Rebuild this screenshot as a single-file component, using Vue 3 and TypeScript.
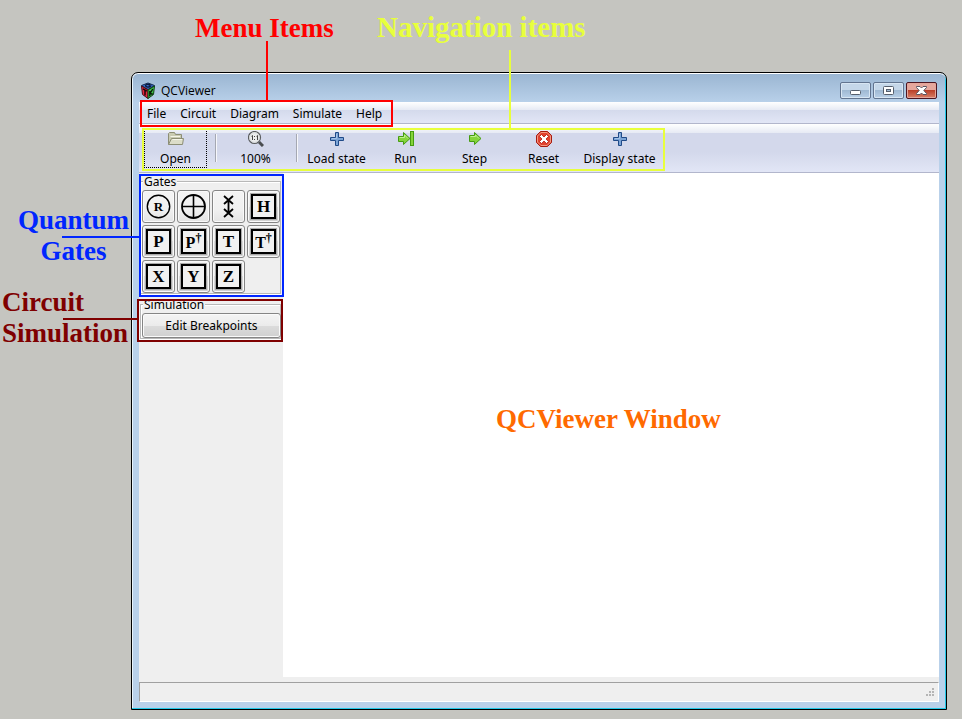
<script setup lang="ts">
interface Gate {
  id: string
  title: string
  letter?: string
  dagger?: boolean
}

const menus: string[] = ['File', 'Circuit', 'Diagram', 'Simulate', 'Help']

const gates: Gate[] = [
  { id: 'rotation', title: 'Rotation' },
  { id: 'not', title: 'Controlled not' },
  { id: 'swap', title: 'Swap' },
  { id: 'h', title: 'Hadamard', letter: 'H' },
  { id: 'p', title: 'Phase', letter: 'P' },
  { id: 'pd', title: 'Phase dagger', letter: 'P', dagger: true },
  { id: 't', title: 'T gate', letter: 'T' },
  { id: 'td', title: 'T dagger', letter: 'T', dagger: true },
  { id: 'x', title: 'X gate', letter: 'X' },
  { id: 'y', title: 'Y gate', letter: 'Y' },
  { id: 'z', title: 'Z gate', letter: 'Z' },
]
</script>

<template>
  <div class="page">
    <main class="window">
      <header class="titlebar">
        <svg class="logo" width="16" height="18" viewBox="0 0 16 18" aria-hidden="true">
          <path d="M8 1L14.5 3.5L8 7.500L1.500 3.500Z" fill="#3a6fd0" stroke="#14294f" />
          <path d="M1.500 4L8 8V16.500L2.500 12.500Z" fill="#e8283f" stroke="#4d0c16" />
          <path d="M14.500 4L8 8V16.500L13.500 12.500Z" fill="#3fc048" stroke="#0f4014" />
          <path d="M10.500 2.800C8.500 1.800 5.500 2.500 5.500 3.800C6 5.300 9.500 5.800 10.500 4.200H8.500" fill="none" stroke="#0c1a3a" stroke-width="1.300" />
          <path d="M3 6.800L6.800 9.200M5 8V13.500" fill="none" stroke="#1b0508" stroke-width="1.500" />
          <path d="M9.800 9V14.300M12.800 7L10 11.500L12.800 12.200" fill="none" stroke="#061a08" stroke-width="1.400" />
        </svg>
        <h1>QCViewer</h1>
        <div class="controls">
          <button type="button" aria-label="Minimize">
            <svg width="29" height="15" viewBox="0 0 29 15"><rect x="9.5" y="7.5" width="10" height="4" rx="1" fill="#fff" stroke="#555e6c" /></svg>
          </button>
          <button type="button" aria-label="Maximize">
            <svg width="29" height="15" viewBox="0 0 29 15"><rect x="9.5" y="3.5" width="10" height="8" rx="1" fill="#fff" stroke="#555e6c" /><rect x="12.5" y="6.5" width="4" height="2" fill="#9eb8d2" stroke="#555e6c" /></svg>
          </button>
          <button type="button" class="close" aria-label="Close">
            <svg width="29" height="15" viewBox="0 0 29 15"><path d="M9.5 3.5H13L14.5 5L16 3.5H19.5V4.5L16.8 7.5L19.5 10.5V11.5H16L14.5 10L13 11.5H9.5V10.5L12.2 7.5L9.5 4.5Z" fill="#fff" stroke="#5a5662" /></svg>
          </button>
        </div>
      </header>

      <div class="client">
        <nav class="menubar">
          <button v-for="m in menus" :key="m" type="button">{{ m }}</button>
        </nav>

        <div class="toolbar">
          <button type="button" class="tool focused">
            <svg width="16" height="16" viewBox="0 0 16 16">
              <path d="M0.5 13.5V2.5L1.5 1.5H6.5L7.5 3.5H13.5V7" fill="#c9cbb2" stroke="#8c8e75" />
              <path d="M2.5 5.5H12" stroke="#f4f4e8" />
              <path d="M3.500 7.500H15.500L14.500 13.500H0.500Z" fill="#dcddc8" stroke="#8c8e75" />
              <path d="M4.500 8.500H14" stroke="#f6f6ea" />
            </svg>
            <span>Open</span>
          </button>
          <i class="sep"></i>
          <button type="button" class="tool">
            <svg width="16" height="16" viewBox="0 0 16 16">
              <path d="M11 11L15 15" stroke="#4a4d50" stroke-width="3" />
              <circle cx="6.5" cy="6.5" r="6" fill="#eceeee" stroke="#5b5e60" stroke-width="1.2" />
              <circle cx="6.5" cy="6.5" r="4.9" fill="none" stroke="#cfd3d5" />
              <path d="M3.5 5.3L4.5 4.5V9M8.5 5.3L9.5 4.5V9" fill="none" stroke="#444" />
              <path d="M6 5H7V6H6ZM6 8H7V9H6Z" fill="#444" />
            </svg>
            <span>100%</span>
          </button>
          <i class="sep"></i>
          <button type="button" class="tool">
            <svg width="16" height="16" viewBox="0 0 16 16"><path d="M6.5 1.5H9.5V6.5H14.5V9.5H9.5V14.5H6.5V9.5H1.5V6.5H6.5Z" fill="#7ba4d6" stroke="#204a87" /><path d="M7.5 3V7.5H3" fill="none" stroke="#a5c4e8" /></svg>
            <span>Load state</span>
          </button>
          <button type="button" class="tool">
            <svg width="18" height="16" viewBox="0 0 18 16"><path d="M1.5 5.5H6.5V1.5L13 7.5L6.5 13.5V10.5H1.5Z" fill="#84d43a" stroke="#459c10" /><path d="M2.5 6.5H7.5V4L11 7.5" fill="none" stroke="#c0ef91" /><rect x="13.5" y="0.5" width="3" height="14" fill="#84d43a" stroke="#459c10" /></svg>
            <span>Run</span>
          </button>
          <button type="button" class="tool">
            <svg width="16" height="16" viewBox="0 0 16 16"><path d="M2.5 4.5H7.5V1.5L14 7.5L7.5 13.5V10.5H2.5Z" fill="#84d43a" stroke="#459c10" /><path d="M3.5 5.5H8.5V4L12 7.5" fill="none" stroke="#c0ef91" /></svg>
            <span>Step</span>
          </button>
          <button type="button" class="tool">
            <svg width="16" height="16" viewBox="0 0 16 16"><path d="M4.5 0.5H11.5L15.5 4.5V11.5L11.5 15.5H4.5L0.5 11.5V4.5Z" fill="#e2422e" stroke="#a51b10" /><path d="M5 1.5H11L14.5 5V11L11 14.5H5L1.5 11V5Z" fill="none" stroke="#f29a83" /><path d="M3.5 5.500L5.500 3.500L8 6L10.500 3.500L12.500 5.500L10 8L12.500 10.500L10.500 12.500L8 10L5.500 12.500L3.500 10.500L6 8Z" fill="#fff" stroke="#b31b12" stroke-width=".8" /></svg>
            <span>Reset</span>
          </button>
          <button type="button" class="tool wide">
            <svg width="16" height="16" viewBox="0 0 16 16"><path d="M6.5 1.5H9.5V6.5H14.5V9.5H9.5V14.5H6.5V9.5H1.5V6.5H6.5Z" fill="#7ba4d6" stroke="#204a87" /><path d="M7.5 3V7.5H3" fill="none" stroke="#a5c4e8" /></svg>
            <span>Display state</span>
          </button>
        </div>

        <div class="body">
          <aside class="sidebar">
            <section class="group">
              <h2>Gates</h2>
              <div class="gates">
                <button v-for="g in gates" :key="g.id" type="button" class="gate" :class="{ plain: !g.letter }" :aria-label="g.title">
                  <span v-if="g.letter" class="box" :class="{ dag: g.dagger }">{{ g.letter }}<sup v-if="g.dagger">†</sup></span>
                  <svg v-else-if="g.id === 'rotation'" width="25" height="25" viewBox="0 0 25 25"><circle cx="12.5" cy="12.5" r="11.2" fill="none" stroke="#000" stroke-width="1.4" /><text class="ring-letter" x="12.5" y="17" text-anchor="middle">R</text></svg>
                  <svg v-else-if="g.id === 'not'" width="25" height="25" viewBox="0 0 25 25"><circle cx="12.5" cy="12.5" r="11.5" fill="none" stroke="#000" stroke-width="1.8" /><path d="M12.5 1V24M1 12.5H24" stroke="#000" stroke-width="1.6" /></svg>
                  <svg v-else width="25" height="25" viewBox="0 0 25 25"><path d="M12.5 6V19M8 2L17 10M17 2L8 10M8 15L17 23M17 15L8 23" fill="none" stroke="#000" stroke-width="1.8" /></svg>
                </button>
              </div>
            </section>
            <section class="group">
              <h2>Simulation</h2>
              <button type="button" class="edit">Edit Breakpoints</button>
            </section>
          </aside>
          <section class="canvas"></section>
        </div>

        <footer class="status">
          <svg width="10" height="10" viewBox="0 0 10 10" aria-hidden="true"><path d="M7 1h2M4 4h2M7 4h2M1 7h2M4 7h2M7 7h2" stroke="#b5b5b5" stroke-width="2" /></svg>
        </footer>
      </div>
    </main>

    <div class="note red box-menu"></div>
    <div class="note yellow box-nav"></div>
    <div class="note blue box-gates"></div>
    <div class="note maroon box-sim"></div>
    <div class="line red line-menu"></div>
    <div class="line yellow line-nav"></div>
    <div class="line blue line-gates"></div>
    <div class="line maroon line-sim"></div>
    <p class="label red label-menu">Menu Items</p>
    <p class="label yellow label-nav">Navigation items</p>
    <p class="label blue label-gates">Quantum<br />Gates</p>
    <p class="label maroon label-sim">Circuit<br />Simulation</p>
    <p class="label orange label-canvas">QCViewer Window</p>
  </div>
</template>

<style>
body {
  margin: 0;
  background: #c5c5c0;
}
</style>

<style scoped>
* {
  box-sizing: border-box;
}
.page {
  position: relative;
  display: flex;
  min-height: 100vh;
  padding: 72px 15px 9px 131px;
  font-family: "Noto Sans", "DejaVu Sans Condensed", sans-serif;
  font-size: 12px;
  line-height: 16px;
  color: #000;
}
button {
  margin: 0;
  padding: 0;
  border: 0;
  background: none;
  font: inherit;
  color: inherit;
}
svg {
  display: block;
}
.window {
  flex: 1;
  display: flex;
  flex-direction: column;
  padding: 0 7px 7px;
  border: 1px solid #000;
  border-radius: 7px 7px 0 0;
  background: linear-gradient(#9ab5d1, #b9d1ea 30px, #b9d1ea);
  box-shadow: inset 0 1px #fff, inset -1px -1px #22c8e8, inset 1px 0 #e8f4fc;
}
.titlebar {
  display: flex;
  align-items: center;
  height: 29px;
  padding: 6px 2px 0 1px;
}
.titlebar h1 {
  flex: 1;
  margin: 0 0 0 5px;
  font: 12px/16px "Open Sans", "Noto Sans", sans-serif;
}
.controls {
  display: flex;
  gap: 2px;
}
.controls button {
  height: 17px;
  border: 1px solid #62748f;
  border-radius: 2px;
  background: linear-gradient(#c5d7e9 45%, #9db7d1 45%, #b9d0e8);
  box-shadow: inset 0 0 0 1px #d8e6f3;
}
.controls .close {
  border-color: #4c1521;
  background: linear-gradient(#e5a79d 45%, #b83a23 45%, #d78068);
  box-shadow: inset 0 0 0 1px #e4a59a;
}
.client {
  flex: 1;
  display: flex;
  flex-direction: column;
  background: #efefef;
}
.menubar {
  display: flex;
  height: 22px;
  padding-left: 1px;
  border-bottom: 1px solid #b2b6cc;
  background: linear-gradient(#fff, #e6eaf4 8px, #d4daec 8px, #e2e6f6);
}
.menubar button {
  padding: 2px 7px 0;
}
.toolbar {
  display: flex;
  height: 49px;
  padding: 5px;
  border-bottom: 1px solid #b2b6cc;
  background: linear-gradient(#fff, #e6eaf4 9px, #d3d8eb 9px, #d3d8eb 28px, #e2e6f6);
}
.tool {
  display: flex;
  flex-direction: column;
  align-items: center;
  gap: 4px;
  width: 69px;
  height: 39px;
  padding-top: 2px;
  white-space: nowrap;
}
.tool.focused {
  width: 63px;
  border: 1px dotted #000;
  padding-top: 1px;
}
.tool.wide {
  width: 83px;
}
.sep {
  width: 2px;
  height: 28px;
  margin: 5px 4px 0 6px;
  border-left: 1px solid #a5a8b2;
  border-right: 1px solid #f6f7fb;
}
.focused + .sep {
  margin-left: 8px;
}
.body {
  flex: 1;
  display: flex;
}
.sidebar {
  width: 144px;
  padding: 3px 2px 0 1px;
}
.group {
  position: relative;
  padding: 14px 0 1px 2px;
}
.group::before {
  content: "";
  position: absolute;
  inset: 5px 0 0;
  border: 1px solid #b8b8b8;
  box-shadow: inset 1px 1px #fff, 0 1px #fff;
}
.group h2 {
  position: absolute;
  top: -2px;
  left: 3px;
  margin: 0;
  padding: 0 1px;
  background: #efefef;
  font-size: 12px;
  font-weight: 400;
  line-height: 16px;
}
.group + .group {
  margin-top: 5px;
}
.gates {
  position: relative;
  display: grid;
  grid-template-columns: repeat(4, 33px);
  gap: 2px;
}
.gate {
  display: grid;
  place-items: center;
  height: 33px;
}
.gate,
.edit {
  border: 1px solid #858585;
  border-radius: 3px;
  background: linear-gradient(#f4f4f4, #ebebeb 50%, #dcdcdc 50%, #d0d0d0);
  box-shadow: inset 0 0 0 1px #fafafa;
}
.gate.plain {
  background: linear-gradient(#f4f4f4, #f0f0f0 60%, #e4e4e4);
}
.box {
  width: 25px;
  height: 25px;
  border: 2px solid #000;
  background: #f1f1f1;
  box-shadow: 0 0 0 1px #aaa;
  font: 700 17px/21px "Liberation Serif", serif;
  text-align: center;
}
.dag {
  display: flex;
  justify-content: center;
  font-size: 16px;
  line-height: 23px;
}
.dag sup {
  font-size: 12px;
  line-height: 15px;
}
.ring-letter {
  font: 700 13px "Liberation Serif", serif;
}
.edit {
  position: relative;
  width: 139px;
  height: 25px;
}
.canvas {
  flex: 1;
  background: #fff;
}
.status {
  display: flex;
  align-items: flex-end;
  justify-content: flex-end;
  height: 20px;
  margin-top: 5px;
  padding: 3px;
  border: 1px solid #a0a0a0;
  border-right-color: #fff;
  border-bottom-color: #fff;
}

/* Callouts drawn over the window */
.red { color: #f00; }
.yellow { color: #e8ff3c; }
.blue { color: #0026ff; }
.maroon { color: #7f0000; }
.orange { color: #ff6a00; }
.note {
  position: absolute;
  border: 2px solid;
  pointer-events: none;
}
.box-menu { left: 140px; top: 100px; width: 253px; height: 27px; }
.box-nav { left: 142px; top: 128px; width: 523px; height: 43px; }
.box-gates { left: 139px; top: 174px; width: 145px; height: 123px; }
.box-sim { left: 137px; top: 299px; width: 146px; height: 43px; }
.line {
  position: absolute;
  background: currentColor;
}
.line-menu { left: 266px; top: 41px; width: 2px; height: 60px; }
.line-nav { left: 509px; top: 50px; width: 2px; height: 79px; }
.line-gates { left: 62px; top: 236px; width: 78px; height: 2px; }
.line-sim { left: 63px; top: 318px; width: 75px; height: 2px; }
.label {
  position: absolute;
  margin: 0;
  font: 700 27px/31px "Liberation Serif", serif;
  text-align: center;
  white-space: nowrap;
  pointer-events: none;
}
.label-menu { left: 195px; top: 13px; }
.label-nav { left: 377px; top: 12px; font-size: 29px; }
.label-gates { left: 18px; top: 205px; }
.label-sim { left: 2px; top: 287px; text-align: left; }
.label-canvas { left: 496px; top: 404px; }
</style>
